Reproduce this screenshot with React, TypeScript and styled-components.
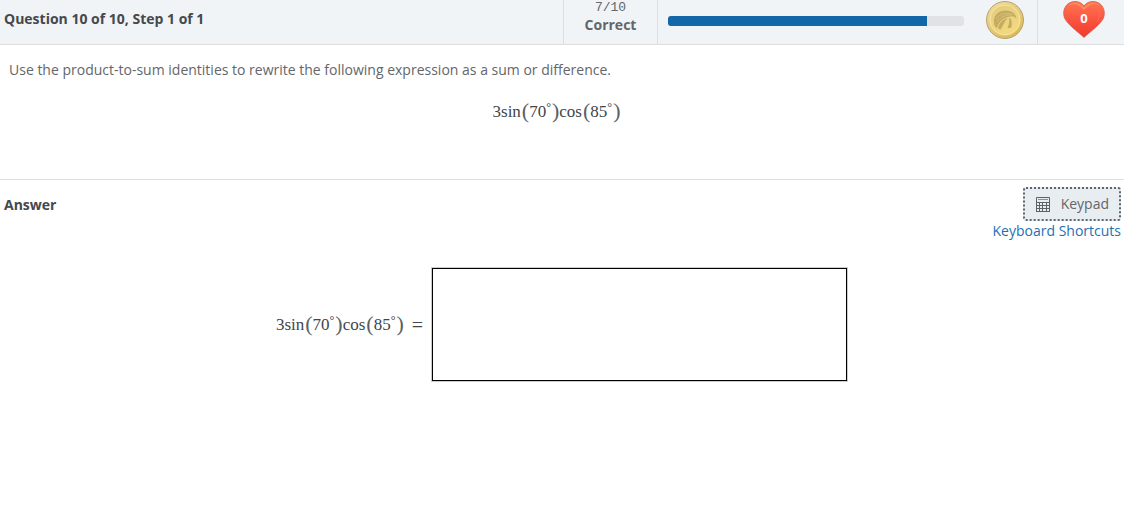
import React from "react";
import styled, { createGlobalStyle } from "styled-components";

const GlobalStyle = createGlobalStyle`
  *, *::before, *::after { box-sizing: border-box; }
  body {
    margin: 0;
    background: #fff;
    color: #63666a;
    font-family: "Open Sans", sans-serif;
    font-size: 14px;
    line-height: 20px;
  }
`;

const Header = styled.header`
  display: flex;
  height: 45px;
  background: #f0f4f7;
  border-bottom: 1px solid #dcdee0;
`;

const Title = styled.h1`
  flex: 1;
  margin: 0;
  padding: 9px 4px;
  color: #45484c;
  font-size: 14px;
  font-weight: 700;
  line-height: 20px;
`;

const Score = styled.div`
  width: 95px;
  border: solid #dcdee0;
  border-width: 0 1px;
  text-align: center;
`;

const ScoreCount = styled.div`
  font-family: "Liberation Mono", monospace;
  font-size: 13px;
  line-height: 16px;
`;

const ScoreLabel = styled.div`
  font-size: 14px;
  font-weight: 700;
  line-height: 18px;
`;

const ProgressArea = styled.div`
  display: flex;
  width: 380px;
  padding: 0 13px 4px 10px;
  align-items: center;
  justify-content: space-between;
  border-right: 1px solid #dcdee0;
`;

const Track = styled.div`
  width: 296px;
  height: 10px;
  margin-top: 2px;
  overflow: hidden;
  border-radius: 3px;
  background: #e1e2e6;
`;

const Fill = styled.div`
  height: 100%;
  background: #1267a8;
`;

const Lives = styled.div`
  display: flex;
  width: 86px;
  padding: 0 0 5px 25px;
  align-items: center;
`;

const Heart = styled.div`
  display: grid;
  place-items: center;
  > * { grid-area: 1 / 1; }
`;

const LivesCount = styled.span`
  z-index: 1;
  padding-bottom: 4px;
  color: #fff;
  font-size: 13px;
  font-weight: 700;
  line-height: 16px;
`;

const Question = styled.section`
  height: 135px;
  padding: 15px 20px 0 9px;
  border-bottom: 1px solid #dcdee0;
`;

const Prompt = styled.p`
  margin: 0 0 20px;
`;

const Centered = styled.div`
  display: flex;
  justify-content: center;
  align-items: center;
`;

const Math = styled.span`
  display: inline-flex;
  align-items: center;
  height: 24px;
  color: #424549;
  font-family: "Liberation Serif", serif;
  font-size: 17px;
  line-height: 24px;
  white-space: pre;
`;

const Paren = styled.span`
  padding: 0 0 2px 1px;
  color: #5c5f63;
  font-size: 22px;
`;

const Degree = styled.span`
  align-self: flex-start;
  font-size: 12px;
  line-height: 14px;
`;

const Equals = styled.span`
  margin-left: 8px;
  font-size: 20px;
`;

const AnswerHead = styled.div`
  display: flex;
  justify-content: space-between;
  padding: 7px 3px 0 4px;
`;

const AnswerTitle = styled.h2`
  margin: 8px 0 0;
  color: #45484c;
  font-size: 14px;
  font-weight: 700;
  line-height: 20px;
`;

const Tools = styled.div`
  display: flex;
  flex-direction: column;
  align-items: flex-end;
`;

const KeypadButton = styled.button`
  display: flex;
  width: 98px;
  height: 34px;
  padding: 0 10px 0 11px;
  align-items: center;
  justify-content: space-between;
  border: 2px dotted #5c6670;
  border-radius: 3px;
  background: #e8edf2;
  color: #63666a;
  font: inherit;
`;

const Shortcuts = styled.a`
  color: #1f6fb2;
  text-decoration: none;
`;

const AnswerRow = styled(Centered)`
  padding-top: 26px;
`;

const AnswerLabel = styled.label`
  display: flex;
  margin-right: 8px;
`;

const AnswerInput = styled.input`
  width: 417px;
  max-width: 60%;
  height: 115px;
  padding: 0 12px;
  border: 1px solid #ccc;
  border-radius: 0;
  outline: 1px solid #000;
  outline-offset: -2px;
  background: #fff;
  font: 17px "Liberation Serif", serif;
`;

function Angle({ value }: { value: string }) {
  return (
    <>
      <Paren>(</Paren>
      {value}
      <Degree>°</Degree>
      <Paren>)</Paren>
    </>
  );
}

function Expression({ equals = false }: { equals?: boolean }) {
  return (
    <Math>
      3sin
      <Angle value="70" />
      cos
      <Angle value="85" />
      {equals && <Equals>=</Equals>}
    </Math>
  );
}

function Coin() {
  return (
    <svg width="38" height="38" viewBox="0 0 38 38" aria-hidden="true">
      <defs>
        <linearGradient id="coinRim" x1="0" y1="0" x2="0.6" y2="1">
          <stop offset="0" stopColor="#f2dfa0" />
          <stop offset="1" stopColor="#dcb95c" />
        </linearGradient>
        <linearGradient id="coinFace" x1="0" y1="0" x2="0.5" y2="1">
          <stop offset="0" stopColor="#e2ca7c" />
          <stop offset="1" stopColor="#f1d97f" />
        </linearGradient>
      </defs>
      <circle cx="19" cy="19" r="18.5" fill="url(#coinRim)" stroke="#b5a469" />
      <circle cx="19" cy="19" r="15" fill="url(#coinFace)" stroke="#f8e6a4" strokeWidth="1" />
      <path
        d="M8 22C7 14 13 9.500 20 9.500C26 9.500 30 13 30.500 18C29 15.500 26.500 15 25 15.500C18 16 13 20 11 27C9 26 8 24 8 22Z"
        fill="#c3ab62"
      />
      <path
        d="M12 27.500C13 22 17 18 22 17C18 20 17.500 25 14.500 28.500Z M24 17C26.500 20 26 24 25 27L21.500 27C23 23 24 20 23 17.500Z"
        fill="#c3ab62"
      />
      <path
        d="M10 18C14 12.500 20 11.500 27 13.500M11 21C14 16 19 14 25 14"
        fill="none"
        stroke="#dcc67a"
        strokeWidth="0.8"
      />
    </svg>
  );
}

function HeartShape() {
  return (
    <svg width="42" height="37" viewBox="0 0 42 37" aria-hidden="true">
      <defs>
        <linearGradient id="heartFill" x1="0" y1="0" x2="0" y2="1">
          <stop offset="0" stopColor="#ff7552" />
          <stop offset="0.5" stopColor="#fb5440" />
          <stop offset="1" stopColor="#ee3a2d" />
        </linearGradient>
      </defs>
      <path
        d="M21 36.500C14 30 5 24 1.500 17C-1.500 8 4 .5 12 .5C16 .5 19 2 21 5C23 2 26 .5 30 .5C38 .5 43.500 8 40.500 17C37 24 28 30 21 36.500Z"
        fill="url(#heartFill)"
        stroke="#d9604d"
        strokeWidth="0.8"
      />
      <path
        d="M5 5C9 0 17 1 21 7C25 1 33 0 37 5C32 2 26 3 21 9C16 3 10 2 5 5Z"
        fill="#ff8a60"
      />
      <path d="M33 6C38 10 38 17 33 22C37 16 37 11 33 6Z" fill="#ff7658" />
    </svg>
  );
}

function KeypadIcon() {
  return (
    <svg width="14" height="15" viewBox="0 0 14 15" fill="none" stroke="#5e6267" aria-hidden="true">
      <path d="M.5 .5H13.500V14.500M.5 .5V14.500M0 5.500H14M0 8.500H14M0 11.500H14M0 14.500H14M3.500 6V14M6.500 6V14M10.500 6V14" />
      <path d="M2 2.500H12" stroke="#8c9095" />
    </svg>
  );
}

export default function App() {
  return (
    <>
      <GlobalStyle />
      <Header>
        <Title>Question 10 of 10, Step 1 of 1</Title>
        <Score>
          <ScoreCount>7/10</ScoreCount>
          <ScoreLabel>Correct</ScoreLabel>
        </Score>
        <ProgressArea>
          <Track role="progressbar" aria-valuenow={7} aria-valuemax={8} aria-label="Progress">
            <Fill style={{ width: `${(7 / 8) * 100}%` }} />
          </Track>
          <Coin />
        </ProgressArea>
        <Lives>
          <Heart>
            <HeartShape />
            <LivesCount>0</LivesCount>
          </Heart>
        </Lives>
      </Header>
      <main>
        <Question>
          <Prompt>
            Use the product-to-sum identities to rewrite the following expression as a sum or
            difference.
          </Prompt>
          <Centered>
            <Expression />
          </Centered>
        </Question>
        <section>
          <AnswerHead>
            <AnswerTitle>Answer</AnswerTitle>
            <Tools>
              <KeypadButton type="button">
                <KeypadIcon />
                Keypad
              </KeypadButton>
              <Shortcuts href="#shortcuts">Keyboard Shortcuts</Shortcuts>
            </Tools>
          </AnswerHead>
          <AnswerRow>
            <AnswerLabel htmlFor="answer">
              <Expression equals />
            </AnswerLabel>
            <AnswerInput id="answer" type="text" />
          </AnswerRow>
        </section>
      </main>
    </>
  );
}
